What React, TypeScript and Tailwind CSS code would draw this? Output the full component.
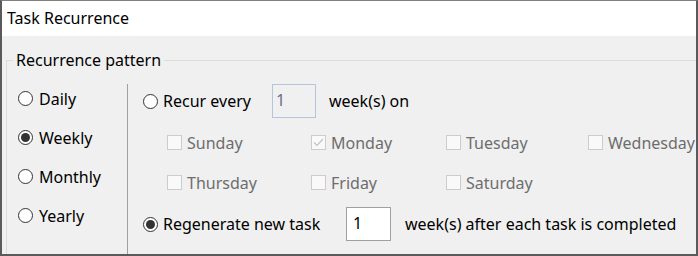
import React from "react";

const font = { fontFamily: '"Noto Sans", "Segoe UI", sans-serif' };

function Radio({ checked }: { checked?: boolean }) {
  return (
    <span className="flex h-[15px] w-[15px] shrink-0 items-center justify-center rounded-full border border-[#333333] bg-white">
      {checked && <span className="h-[9px] w-[9px] rounded-full bg-[#333333]" />}
    </span>
  );
}

function Check({ checked, label }: { checked?: boolean; label: string }) {
  return (
    <div className="flex items-center gap-[5px] text-[#6d6d6d]">
      <span className="flex h-[15px] w-[15px] shrink-0 items-center justify-center border border-[#cccccc] bg-[#f9f9f9]">
        {checked && (
          <svg width="13" height="13" viewBox="0 0 13 13">
            <path d="M2 6.5 L5 9.5 L11 3" fill="none" stroke="#c3c3c3" strokeWidth="1.2" />
          </svg>
        )}
      </span>
      <span>{label}</span>
    </div>
  );
}

export default function App() {
  return (
    <div
      className="h-[256px] w-[698px] overflow-hidden border-t border-t-[#808080] border-x-2 border-b-2 border-x-[#5a5a5a] border-b-[#5a5a5a] bg-[#f0f0f0] text-[16px] leading-[22px] text-black"
      style={font}
    >
      <div className="h-[35px] bg-white pl-[5px] leading-[35px]">Task Recurrence</div>
      <fieldset className="ml-[4px] mt-[13px] min-w-0 border-l border-t border-[#dcdcdc]">
        <legend className="ml-[6px] px-[3px] leading-[22px]">Recurrence pattern</legend>
        <div className="flex">
          <div className="w-[120px] shrink-0 pl-[11px] pt-[8px]">
            {[
              ["Daily", false],
              ["Weekly", true],
              ["Monthly", false],
              ["Yearly", false],
            ].map(([l, c]) => (
              <div key={l as string} className="flex h-[39px] items-center gap-[6px]">
                <Radio checked={c as boolean} />
                <span>{l as string}</span>
              </div>
            ))}
          </div>
          <div className="mt-[13px] min-h-[200px] flex-1 border-l border-[#a0a0a0]">
            <div className="flex h-[34px] items-center pl-[15px]">
              <Radio />
              <span className="ml-[5px] w-[109px]">Recur every</span>
              <div className="h-[34px] w-[44px] border border-[#b4c6dc] bg-[#f0f0f0] pl-[3px] pt-[4px] text-[#6d6d8d]">
                1
              </div>
              <span className="ml-[13px]">week(s) on</span>
            </div>
            <div className="mt-[10px] grid h-[29px] grid-cols-[144px_135px_142px_1fr] items-center pl-[39px]">
              <Check label="Sunday" />
              <Check label="Monday" checked />
              <Check label="Tuesday" />
              <Check label="Wednesday" />
            </div>
            <div className="mt-[11px] grid h-[29px] grid-cols-[144px_135px_142px_1fr] items-center pl-[39px]">
              <Check label="Thursday" />
              <Check label="Friday" />
              <Check label="Saturday" />
            </div>
            <div className="mt-[10px] flex h-[34px] items-center pl-[15px]">
              <Radio checked />
              <span className="ml-[5px] w-[183px]">Regenerate new task</span>
              <div className="h-[34px] w-[45px] border border-[#a0a0a0] bg-white pl-[6px] pt-[4px]">1</div>
              <span className="ml-[14px] whitespace-nowrap">week(s) after each task is completed</span>
            </div>
          </div>
        </div>
      </fieldset>
    </div>
  );
}
